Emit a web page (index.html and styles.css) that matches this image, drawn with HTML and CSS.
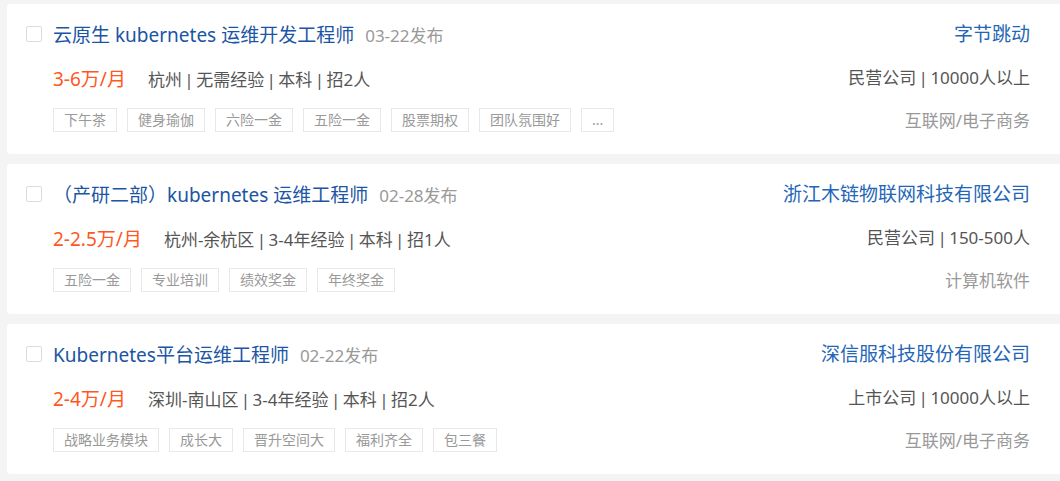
FILE: index.html
```html
<!DOCTYPE html>
<html lang="zh-CN">

<head>
  <meta charset="UTF-8">
  <meta name="viewport" content="width=device-width, initial-scale=1.0">
  <title>职位列表</title>
  <link rel="stylesheet" href="styles.css">
</head>

<body>
  <div class="job-list">
    <div class="job-card">
      <div class="job-main">
        <div class="job-head">
          <span class="check"></span>
          <a class="job-title" href="#">云原生 kubernetes 运维开发工程师</a>
          <span class="job-date">03-22发布</span>
        </div>
        <div class="job-info">
          <span class="salary">3-6万/月</span>
          <span class="detail">杭州 | 无需经验 | 本科 | 招2人</span>
        </div>
        <div class="tags">
          <span class="tag">下午茶</span>
          <span class="tag">健身瑜伽</span>
          <span class="tag">六险一金</span>
          <span class="tag">五险一金</span>
          <span class="tag">股票期权</span>
          <span class="tag">团队氛围好</span>
          <span class="tag">...</span>
        </div>
      </div>
      <div class="company">
        <a class="company-name" href="#">字节跳动</a>
        <div class="company-type">民营公司 | 10000人以上</div>
        <div class="company-field">互联网/电子商务</div>
      </div>
    </div>

    <div class="job-card">
      <div class="job-main">
        <div class="job-head">
          <span class="check"></span>
          <a class="job-title" href="#">（产研二部）kubernetes 运维工程师</a>
          <span class="job-date">02-28发布</span>
        </div>
        <div class="job-info">
          <span class="salary">2-2.5万/月</span>
          <span class="detail">杭州-余杭区 | 3-4年经验 | 本科 | 招1人</span>
        </div>
        <div class="tags">
          <span class="tag">五险一金</span>
          <span class="tag">专业培训</span>
          <span class="tag">绩效奖金</span>
          <span class="tag">年终奖金</span>
        </div>
      </div>
      <div class="company">
        <a class="company-name" href="#">浙江木链物联网科技有限公司</a>
        <div class="company-type">民营公司 | 150-500人</div>
        <div class="company-field">计算机软件</div>
      </div>
    </div>

    <div class="job-card">
      <div class="job-main">
        <div class="job-head">
          <span class="check"></span>
          <a class="job-title" href="#">Kubernetes平台运维工程师</a>
          <span class="job-date">02-22发布</span>
        </div>
        <div class="job-info">
          <span class="salary">2-4万/月</span>
          <span class="detail">深圳-南山区 | 3-4年经验 | 本科 | 招2人</span>
        </div>
        <div class="tags">
          <span class="tag">战略业务模块</span>
          <span class="tag">成长大</span>
          <span class="tag">晋升空间大</span>
          <span class="tag">福利齐全</span>
          <span class="tag">包三餐</span>
        </div>
      </div>
      <div class="company">
        <a class="company-name" href="#">深信服科技股份有限公司</a>
        <div class="company-type">上市公司 | 10000人以上</div>
        <div class="company-field">互联网/电子商务</div>
      </div>
    </div>
  </div>
</body>

</html>
```

FILE: styles.css
```css
body {
  margin: 0;
  background-color: #f4f4f4;
  font-family: 'Noto Sans', 'Noto Sans CJK SC', sans-serif;
  overflow: hidden;
}

a {
  text-decoration: none;
}

.job-list {
  display: flex;
  flex-direction: column;
  gap: 10px;
  padding: 4px 0 0 7px;
  width: 1060px;
}

.job-card {
  display: flex;
  justify-content: space-between;
  background-color: #fff;
  border-radius: 4px;
  padding: 13px 37px 21px 19px;
  height: 116px;
}

.job-head {
  display: flex;
  align-items: center;
  height: 34px;
}

.check {
  width: 14px;
  height: 14px;
  border: 1px solid #dcdcdc;
  border-radius: 2px;
  margin-right: 11px;
}

.job-title {
  font-size: 19px;
  color: #1b55a3;
}

.job-date {
  font-size: 17px;
  color: #999;
  margin-left: 11px;
}

.job-info {
  display: flex;
  align-items: center;
  height: 34px;
  margin-top: 10px;
  padding-left: 27px;
}

.salary {
  font-size: 19px;
  color: #ff5722;
  margin-right: 22px;
}

.detail {
  font-size: 17px;
  color: #555;
  word-spacing: -2px;
}

.tags {
  display: flex;
  gap: 10px;
  margin-top: 13px;
  padding-left: 27px;
}

.tag {
  height: 22px;
  line-height: 22px;
  padding: 0 10px;
  border: 1px solid #e8e8e8;
  font-size: 14px;
  color: #999;
}

.company {
  display: flex;
  flex-direction: column;
  align-items: flex-end;
}

.company-name {
  height: 34px;
  line-height: 34px;
  font-size: 19px;
  color: #2466b6;
}

.company-type {
  height: 34px;
  line-height: 34px;
  margin-top: 10px;
  font-size: 17px;
  color: #555;
  word-spacing: -2px;
}

.company-field {
  height: 24px;
  line-height: 24px;
  margin-top: 14px;
  font-size: 17px;
  color: #999;
}
```
